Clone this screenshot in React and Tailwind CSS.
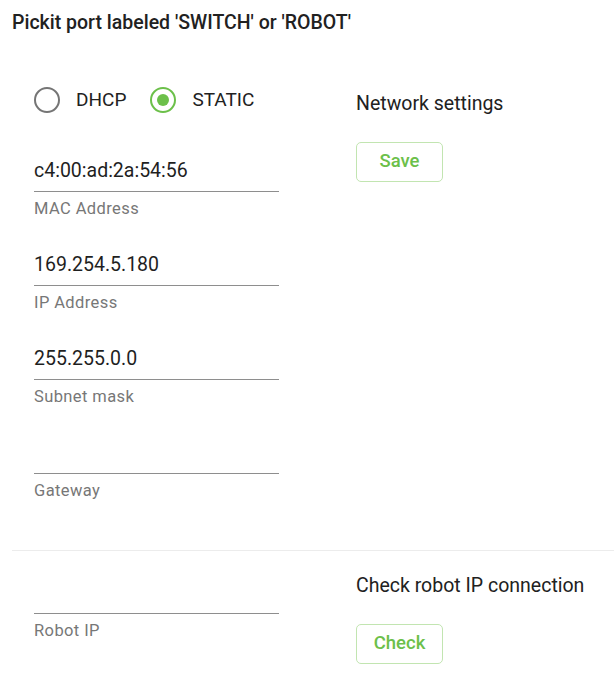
import { useState } from 'react'

const fields = [
  { label: 'MAC Address', value: 'c4:00:ad:2a:54:56' },
  { label: 'IP Address', value: '169.254.5.180' },
  { label: 'Subnet mask', value: '255.255.0.0' },
  { label: 'Gateway', value: '' },
]

function Radio({ checked, label, onClick }) {
  return (
    <button onClick={onClick} className="flex items-center gap-[16px] h-[26px]">
      <span
        className={`w-[26px] h-[26px] rounded-full border-[2.5px] flex items-center justify-center ${
          checked ? 'border-[#6cc04a]' : 'border-[#757575]'
        }`}
      >
        {checked && <span className="w-[12px] h-[12px] rounded-full bg-[#6cc04a]" />}
      </span>
      <span className="text-[19px] leading-[24px] text-[#212121]">{label}</span>
    </button>
  )
}

function Field({ label, value }) {
  return (
    <div className="w-[245px]">
      <div className="pb-[8px] border-b border-[#8e8e8e]">
        <input
          defaultValue={value}
          className="block w-full h-[24px] text-[19.5px] leading-[24px] text-[#1f1f1f] outline-none bg-transparent"
        />
      </div>
      <div className="mt-[7px] text-[16.5px] leading-[20px] text-[#777777] tracking-[0.4px]">{label}</div>
    </div>
  )
}

function OutlineButton({ children }) {
  return (
    <button className="w-[87px] h-[40px] rounded-[5px] border border-[#c2e5b1] text-[18.5px] font-medium text-[#6cc04a]">
      {children}
    </button>
  )
}

export default function App() {
  const [mode, setMode] = useState('static')

  return (
    <div className="w-[614px] bg-white font-['Roboto',sans-serif]">
      <div className="px-3 pt-[11px] text-[19.5px] leading-[24px] font-medium text-[#212121]">
        Pickit port labeled 'SWITCH' or 'ROBOT'
      </div>

      <div className="flex items-start mt-[52px]">
        <div className="ml-[34px] w-[245px]">
          <div className="flex items-center gap-[24px]">
            <Radio checked={mode === 'dhcp'} label="DHCP" onClick={() => setMode('dhcp')} />
            <Radio checked={mode === 'static'} label="STATIC" onClick={() => setMode('static')} />
          </div>
          <div className="mt-[46px] flex flex-col gap-[34px]">
            {fields.map((f) => (
              <Field key={f.label} label={f.label} value={f.value} />
            ))}
          </div>
        </div>

        <div className="ml-[77px] pt-[5px]">
          <div className="text-[19.5px] leading-[24px] text-[#212121]">Network settings</div>
          <div className="mt-[26px]">
            <OutlineButton>Save</OutlineButton>
          </div>
        </div>
      </div>

      <div className="ml-3 mt-[49px] border-t border-[#ececec]" />

      <div className="flex items-start pb-[28px]">
        <div className="ml-[34px] pt-[30px]">
          <Field label="Robot IP" value="" />
        </div>
        <div className="ml-[77px] pt-[23px]">
          <div className="text-[19.5px] leading-[24px] text-[#212121]">Check robot IP connection</div>
          <div className="mt-[26px]">
            <OutlineButton>Check</OutlineButton>
          </div>
        </div>
      </div>
    </div>
  )
}
